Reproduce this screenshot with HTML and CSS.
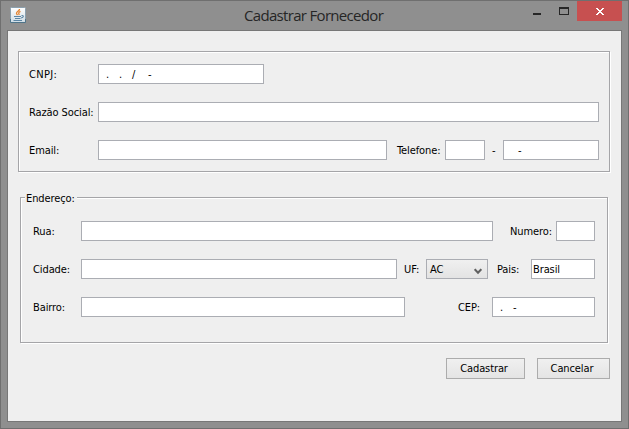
FILE: index.html
```html
<!DOCTYPE html>
<html lang="pt-BR">
<head>
<meta charset="utf-8">
<title>Cadastrar Fornecedor</title>
<link rel="stylesheet" href="styles.css">
</head>
<body>
<div class="window">
  <header class="titlebar">
    <svg class="app-icon" width="16" height="16" viewBox="0 0 16 16">
      <defs><linearGradient id="tile" x1="0" y1="0" x2="0" y2="1"><stop offset="0" stop-color="#fff"/><stop offset="1" stop-color="#cfdce4"/></linearGradient></defs>
      <rect x=".5" y=".5" width="15" height="15" rx="1" fill="url(#tile)" stroke="#8ba0ae"/>
      <path d="M.5 12v3.5h15V12" fill="none" stroke="#4f7489"/>
      <path d="M9.5 2c.3 2-3 2.500-3 4.200 0 .8.800 1.200 1 2M10.500 4.300c-1.500.6-2.500 1.500-1.200 3.700" fill="none" stroke="#e58532" stroke-width="1.300"/>
      <path d="M4 9.500h7M5 11.500h5.500M3.500 13.500h8.500M11.500 8.500c2.500-.5 2.500 2-.5 2.500" fill="none" stroke="#5c86a5" stroke-width="1.100"/>
    </svg>
    <h1 class="title">Cadastrar Fornecedor</h1>
    <svg class="controls" width="89" height="20" viewBox="0 0 89 20">
      <path d="M0 12h8v2H0z" fill="#262626"/>
      <path d="M26 6h10v8H26zm1 2v5h8V8z" fill="#262626" fill-rule="evenodd"/>
      <path d="M44 0h45v20H44z" fill="#c75050"/>
      <path d="M63 7h2v1h1v1h2V8h1V7h2v1h-1v1h-1v1h-1v1h1v1h1v1h1v1h-2v-1h-1v-1h-2v1h-1v1h-2v-1h1v-1h1v-1h1v-1h-1V9h-1V8h-1z" fill="#fff"/>
    </svg>
  </header>
  <main class="content">
    <section class="group company">
      <div class="row"><label class="label l-main l-cnpj">CNPJ:</label><div class="field f-cnpj"><span class="m1">.</span><span class="m2">.</span><span class="m3">/</span><span>-</span></div></div>
      <div class="row"><label class="label l-main">Razão Social:</label><div class="field fill"></div></div>
      <div class="row"><label class="label l-main">Email:</label><div class="field fill"></div><label class="label l-tel">Telefone:</label><div class="field f-ddd"></div><span class="label dash">-</span><div class="field f-tel">-</div></div>
    </section>
    <section class="group address">
      <h2 class="legend">Endereço:</h2>
      <div class="row"><label class="label l-addr">Rua:</label><div class="field fill"></div><label class="label l-num">Numero:</label><div class="field f-num"></div></div>
      <div class="row"><label class="label l-addr">Cidade:</label><div class="field fill"></div><label class="label l-uf">UF:</label><div class="field select"><span>AC</span><svg width="8" height="7" viewBox="0 0 8 7"><path d="M.7 1.200 4 4.700l3.300-3.500" fill="none" stroke="#606060" stroke-width="2"/></svg></div><label class="label l-pais">Pais:</label><div class="field f-pais">Brasil</div></div>
      <div class="row"><label class="label l-addr">Bairro:</label><div class="field fill"></div><label class="label l-cep">CEP:</label><div class="field f-cep"><span class="c1">.</span><span>-</span></div></div>
    </section>
    <footer class="actions"><button class="button b-save">Cadastrar</button><button class="button b-cancel">Cancelar</button></footer>
  </main>
</div>
</body>
</html>
```
FILE: styles.css
```css
* { box-sizing: border-box; }
body { margin: 0; color: #000; font: 11px/14px "DejaVu Sans Condensed", "DejaVu Sans", sans-serif; font-stretch: condensed; letter-spacing: -0.1px; }
.window { width: 629px; height: 429px; border: 1px solid #6f6f6f; background: #8f8f8f; padding: 0 6px 6px; }
.titlebar { display: flex; height: 29px; padding-left: 3px; }
.app-icon { flex: none; margin-top: 6px; }
.title { flex: 1; margin: 0; padding-left: 218px; font: 15px/28px "Open Sans", sans-serif; font-stretch: normal; letter-spacing: -0.68px; color: #262626; white-space: nowrap; }
.controls { flex: none; margin-right: 0; }
.content { height: 392px; border: 1px solid #777; background: #efefef; padding: 20px 10px 0; }
.group { border: 1px solid #a5a5a8; box-shadow: 1px 1px 0 #fff, inset 1px 1px 0 #fff; }
.company { width: 592px; height: 121px; padding: 12px 10px 0; }
.address { width: 588px; height: 146px; margin: 25px 0 0 2px; padding: 0 12px; }
.row { display: flex; height: 20px; margin-bottom: 18px; align-items: center; }
.label, .field { white-space: pre; }
.label { flex: none; padding-top: 2px; }
.field { display: flex; flex: none; align-items: center; height: 20px; border: 1px solid #abadb3; background: #fff; padding: 2px 0 0 2px; }
.field.fill { flex: 1; }
.l-main { width: 69px; }
.l-cnpj { letter-spacing: 0.3px; }
.f-cnpj { width: 166px; padding-left: 7px; }
.m1 { width: 13px; }
.m2 { width: 13px; }
.m3 { width: 16px; }
.l-tel { width: 58px; padding-left: 10px; }
.f-ddd { width: 40px; }
.dash { width: 18px; padding-left: 7px; }
.f-tel { width: 96px; padding-left: 14px; }
.legend { width: max-content; height: 14px; margin: -7px 0 16px -8px; padding: 0 2px 0 1px; background: #efefef; font: inherit; line-height: 15px; }
.l-addr { width: 48px; }
.l-num { width: 63px; padding-left: 17px; }
.f-num { width: 39px; }
.l-uf { width: 29px; padding-left: 7px; }
.select { width: 62px; padding: 2px 5px 0 3px; justify-content: space-between; background: linear-gradient(#f0f0f0, #e3e3e3); }
.select svg { margin-top: 3px; }
.l-pais { width: 43px; padding-left: 9px; }
.f-pais { width: 64px; padding-left: 1px; }
.l-cep { width: 87px; padding-left: 53px; }
.f-cep { width: 103px; padding-left: 7px; }
.c1 { width: 13px; }
.actions { display: flex; justify-content: flex-end; gap: 12px; margin: 15px 1px 0 0; }
.button { height: 21px; padding: 0; border: 1px solid #acacac; background: linear-gradient(#f0f0f0, #e4e4e4); color: #000; font: inherit; letter-spacing: inherit; }
.b-save { width: 79px; padding-right: 3px; }
.b-cancel { width: 73px; padding-right: 3px; }
```
